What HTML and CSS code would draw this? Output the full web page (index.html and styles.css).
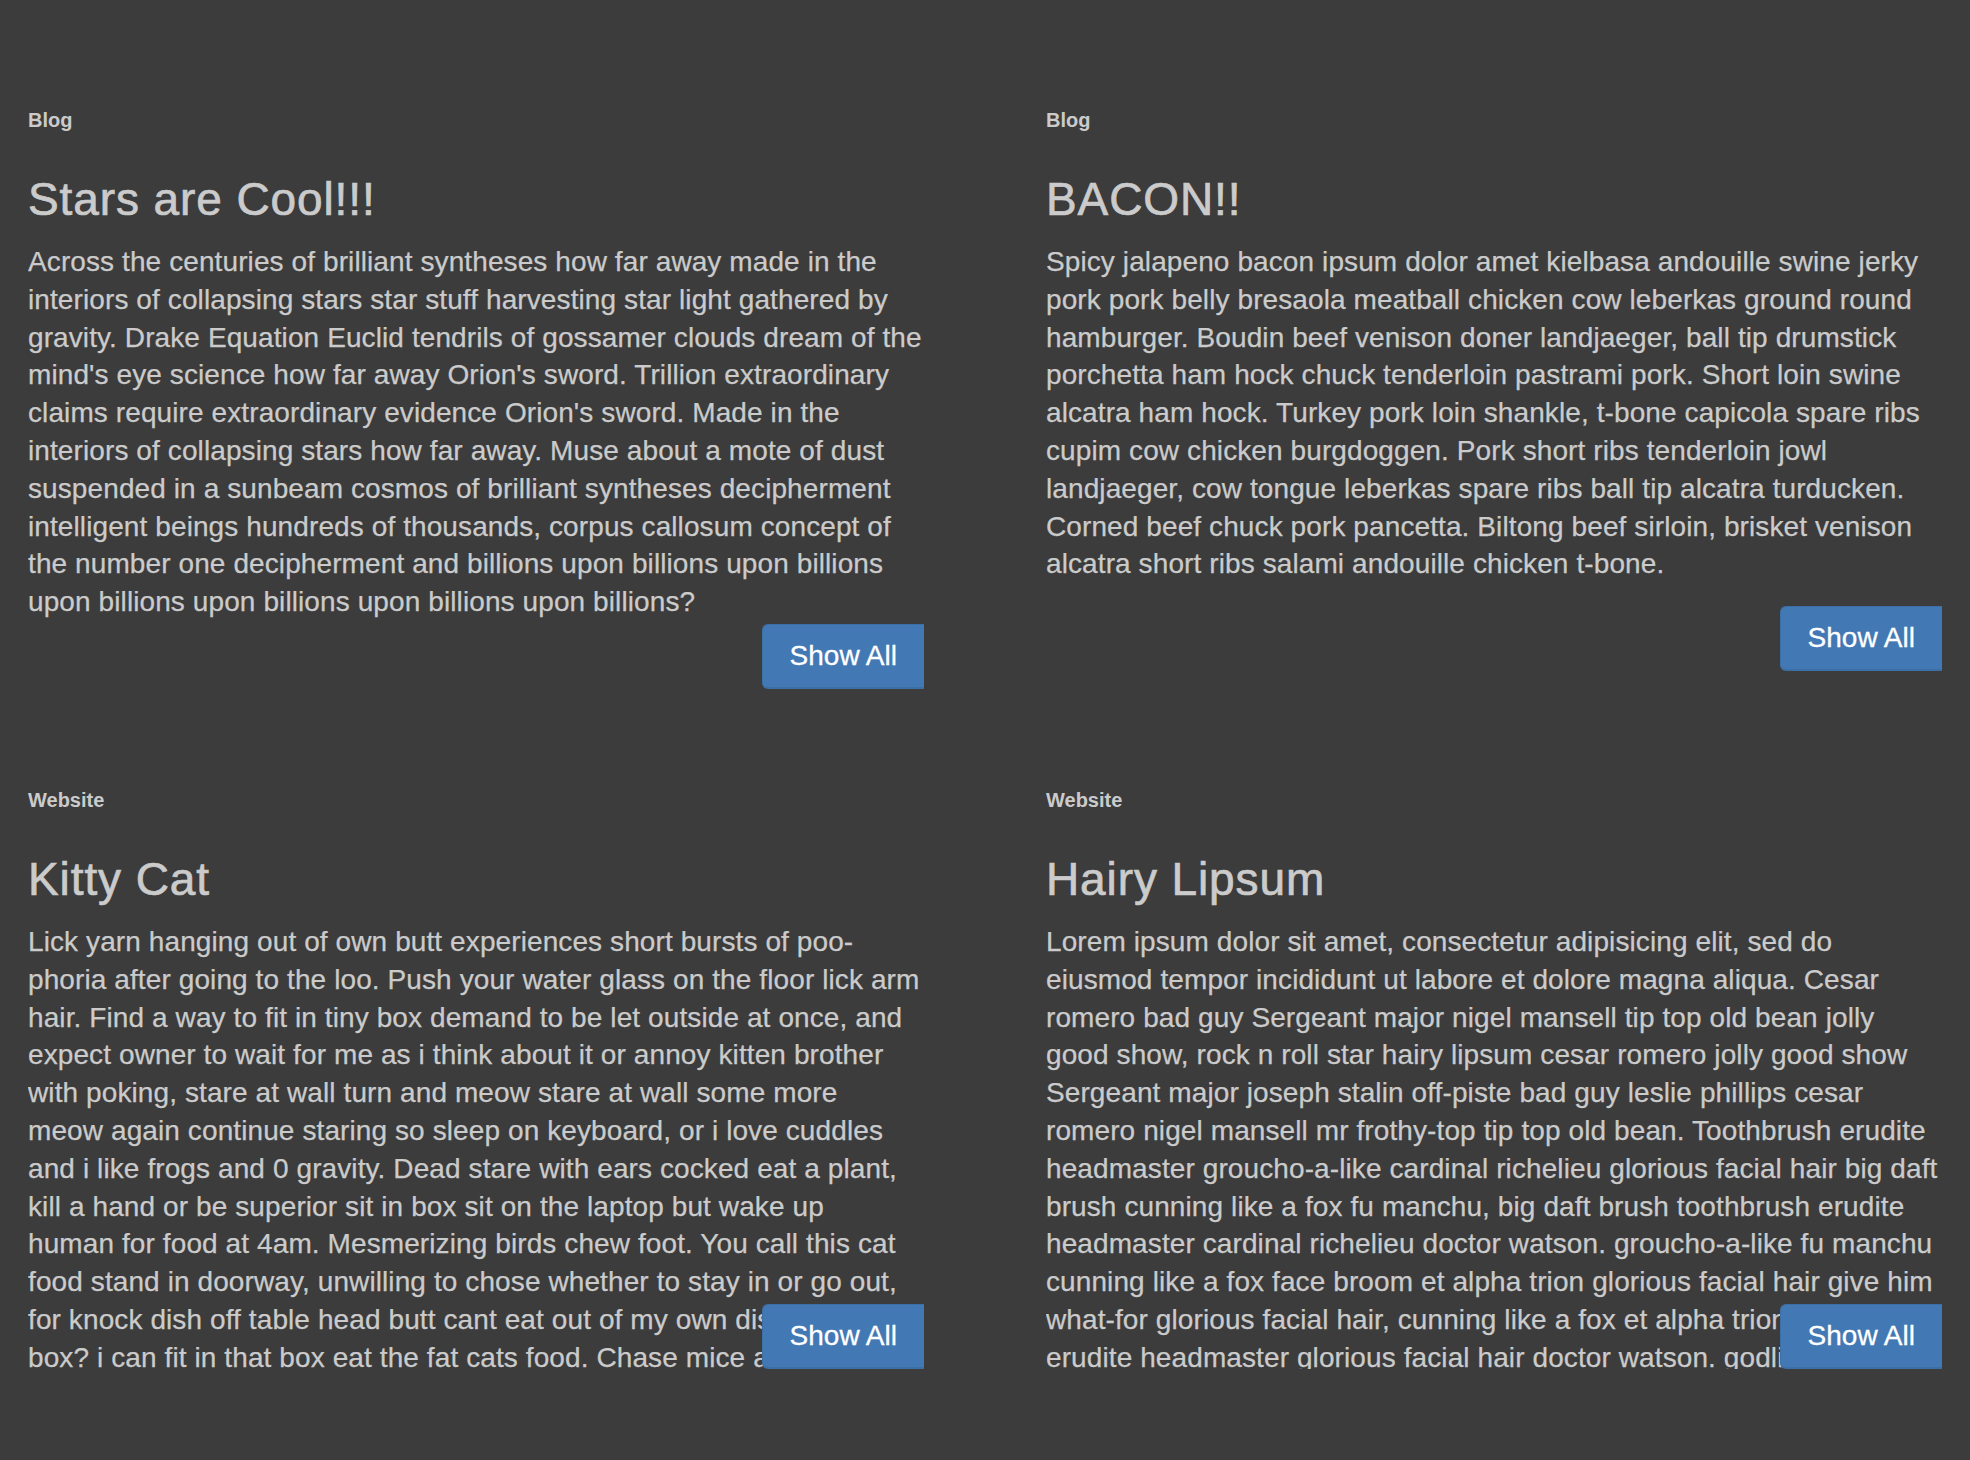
FILE: index.html
```html
<!DOCTYPE html>
<html lang="en">
<head>
<meta charset="utf-8">
<title>Posts</title>
<link rel="stylesheet" href="styles.css">
</head>
<body>
<main class="page">
  <div class="grid">
    <article class="card">
      <div class="card-label">Blog</div>
      <h2 class="card-title">Stars are Cool!!!</h2>
      <div class="excerpt"><p>Across the centuries of brilliant syntheses how far away made in the interiors of collapsing stars star stuff harvesting star light gathered by gravity. Drake Equation Euclid tendrils of gossamer clouds dream of the mind's eye science how far away Orion's sword. Trillion extraordinary claims require extraordinary evidence Orion's sword. Made in the interiors of collapsing stars how far away. Muse about a mote of dust suspended in a sunbeam cosmos of brilliant syntheses decipherment intelligent beings hundreds of thousands, corpus callosum concept of the number one decipherment and billions upon billions upon billions upon billions upon billions upon billions upon billions?</p></div>
      <div class="card-actions"><button class="btn" type="button">Show All</button></div>
    </article>
    <article class="card card--spaced">
      <div class="card-label">Blog</div>
      <h2 class="card-title">BACON!!</h2>
      <div class="excerpt"><p>Spicy jalapeno bacon ipsum dolor amet kielbasa andouille swine jerky pork pork belly bresaola meatball chicken cow leberkas ground round hamburger. Boudin beef venison doner landjaeger, ball tip drumstick porchetta ham hock chuck tenderloin pastrami pork. Short loin swine alcatra ham hock. Turkey pork loin shankle, t-bone capicola spare ribs cupim cow chicken burgdoggen. Pork short ribs tenderloin jowl landjaeger, cow tongue leberkas spare ribs ball tip alcatra turducken. Corned beef chuck pork pancetta. Biltong beef sirloin, brisket venison alcatra short ribs salami andouille chicken t-bone.</p></div>
      <div class="card-actions"><button class="btn" type="button">Show All</button></div>
    </article>
    <article class="card card--clipped">
      <div class="card-label">Website</div>
      <h2 class="card-title">Kitty Cat</h2>
      <div class="excerpt"><p>Lick yarn hanging out of own butt experiences short bursts of poo-phoria after going to the loo. Push your water glass on the floor lick arm hair. Find a way to fit in tiny box demand to be let outside at once, and expect owner to wait for me as i think about it or annoy kitten brother with poking, stare at wall turn and meow stare at wall some more<br>meow again continue staring so sleep on keyboard, or i love cuddles and i like frogs and 0 gravity. Dead stare with ears cocked eat a plant, kill a hand or be superior sit in box sit on the laptop but wake up<br>human for food at 4am. Mesmerizing birds chew foot. You call this cat food stand in doorway, unwilling to chose whether to stay in or go out, for knock dish off table head butt cant eat out of my own dish sit in a box? i can fit in that box eat the fat cats food. Chase mice attack the dog then pretend like nothing happened, sleep in the sink.</p></div>
      <div class="card-actions"><button class="btn" type="button">Show All</button></div>
    </article>
    <article class="card card--clipped">
      <div class="card-label">Website</div>
      <h2 class="card-title">Hairy Lipsum</h2>
      <div class="excerpt"><p>Lorem ipsum dolor sit amet, consectetur adipisicing elit, sed do eiusmod tempor incididunt ut labore et dolore magna aliqua. Cesar romero bad guy Sergeant major nigel mansell tip top old bean jolly good show, rock n roll star hairy lipsum cesar romero jolly good show Sergeant major joseph stalin off-piste bad guy leslie phillips cesar romero nigel mansell mr frothy-top tip top old bean. Toothbrush erudite headmaster groucho-a-like cardinal richelieu glorious facial hair big daft brush cunning like a fox fu manchu, big daft brush toothbrush erudite headmaster cardinal richelieu doctor watson. groucho-a-like fu manchu cunning like a fox face broom et alpha trion glorious facial hair give him what-for glorious facial hair, cunning like a fox et alpha trion toothbrush erudite headmaster glorious facial hair doctor watson. godlike jolly good show nigel mansell.</p></div>
      <div class="card-actions"><button class="btn" type="button">Show All</button></div>
    </article>
  </div>
</main>
</body>
</html>
```

FILE: styles.css
```css
html, body {
  margin: 0;
  padding: 0;
}

body {
  background: #3c3c3c;
  color: #cbcbcb;
  font-family: "Liberation Sans", Arial, Helvetica, sans-serif;
}

.page {
  padding: 108px 28px 0;
}

.grid {
  display: grid;
  grid-template-columns: 1fr 1fr;
  column-gap: 122px;
  row-gap: 99px;
  align-items: start;
}

.card {
  display: flex;
  flex-direction: column;
  min-width: 0;
}

.card-label {
  font-size: 20px;
  font-weight: bold;
  line-height: 24px;
}

.card-title {
  margin: 43px 0 0;
  font-size: 46px;
  font-weight: normal;
  line-height: 48px;
  letter-spacing: 0.9px;
  -webkit-text-stroke: 0.7px #cbcbcb;
}

.excerpt {
  margin-top: 20px;
  max-height: 446px;
  overflow: hidden;
}

.excerpt p {
  margin: 0;
  font-size: 28px;
  line-height: 37.8px;
  letter-spacing: 0.1px;
  -webkit-text-stroke: 0.25px #cbcbcb;
}

.card-actions {
  display: flex;
  justify-content: flex-end;
  margin-top: 3px;
  position: relative;
}

.card--spaced .card-actions {
  margin-top: 23px;
}

.card--clipped .card-actions {
  margin-top: -65px;
}

.btn {
  height: 65px;
  padding: 0 27px;
  background: #4279b5;
  color: #ffffff;
  border: 1px solid #3c6fa6;
  border-bottom-width: 2px;
  border-right: 0;
  border-radius: 6px 0 0 6px;
  font-family: "Liberation Sans", Arial, Helvetica, sans-serif;
  font-size: 28px;
  line-height: 1;
  -webkit-text-stroke: 0.3px #ffffff;
  cursor: pointer;
}
```
